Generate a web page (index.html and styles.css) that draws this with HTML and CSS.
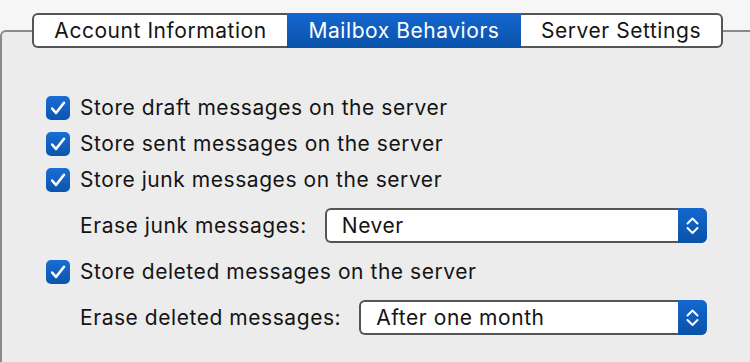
FILE: index.html
```html
<!DOCTYPE html>
<html>
<head>
<meta charset="utf-8">
<link rel="stylesheet" href="styles.css">
</head>
<body>
<div class="page">
  <div class="tabs">
    <div class="tab tab-first">Account Information</div>
    <div class="tab tab-selected">Mailbox Behaviors</div>
    <div class="tab tab-last">Server Settings</div>
  </div>
  <div class="box">
    <div class="check-row">
      <span class="checkbox"><svg viewBox="0 0 24 24" width="24" height="24"><path d="M6.2 12.6 L10 17 L18 6.8" fill="none" stroke="#fff" stroke-width="2.6" stroke-linecap="round" stroke-linejoin="round"/></svg></span>
      <span class="label">Store draft messages on the server</span>
    </div>
    <div class="check-row">
      <span class="checkbox"><svg viewBox="0 0 24 24" width="24" height="24"><path d="M6.2 12.6 L10 17 L18 6.8" fill="none" stroke="#fff" stroke-width="2.6" stroke-linecap="round" stroke-linejoin="round"/></svg></span>
      <span class="label">Store sent messages on the server</span>
    </div>
    <div class="check-row">
      <span class="checkbox"><svg viewBox="0 0 24 24" width="24" height="24"><path d="M6.2 12.6 L10 17 L18 6.8" fill="none" stroke="#fff" stroke-width="2.6" stroke-linecap="round" stroke-linejoin="round"/></svg></span>
      <span class="label">Store junk messages on the server</span>
    </div>
    <div class="popup-row popup-row-first">
      <span class="label">Erase junk messages:</span>
      <div class="popup">
        <span class="popup-value">Never</span>
        <span class="popup-arrows"><svg viewBox="0 0 29 35" width="29" height="35"><path d="M9.5 15.5 L14.5 10.5 L19.5 15.5 M9.5 20 L14.5 25 L19.5 20" fill="none" stroke="#fff" stroke-width="2" stroke-linecap="round" stroke-linejoin="round"/></svg></span>
      </div>
    </div>
    <div class="check-row check-row-after">
      <span class="checkbox"><svg viewBox="0 0 24 24" width="24" height="24"><path d="M6.2 12.6 L10 17 L18 6.8" fill="none" stroke="#fff" stroke-width="2.6" stroke-linecap="round" stroke-linejoin="round"/></svg></span>
      <span class="label">Store deleted messages on the server</span>
    </div>
    <div class="popup-row">
      <span class="label">Erase deleted messages:</span>
      <div class="popup">
        <span class="popup-value">After one month</span>
        <span class="popup-arrows"><svg viewBox="0 0 29 35" width="29" height="35"><path d="M9.5 15.5 L14.5 10.5 L19.5 15.5 M9.5 20 L14.5 25 L19.5 20" fill="none" stroke="#fff" stroke-width="2" stroke-linecap="round" stroke-linejoin="round"/></svg></span>
      </div>
    </div>
  </div>
</div>
</body>
</html>
```

FILE: styles.css
```css
html, body {
  margin: 0;
  padding: 0;
  background: #f6f6f6;
  overflow: hidden;
}
body {
  width: 750px;
  height: 362px;
  font-family: Inter, "Noto Sans", sans-serif;
  font-size: 21px;
  letter-spacing: 0.55px;
  color: #141414;
}
.page {
  padding-top: 13px;
}
.tabs {
  display: flex;
  margin-left: 32px;
  height: 35px;
  position: relative;
  z-index: 1;
}
.tab {
  box-sizing: border-box;
  height: 35px;
  display: flex;
  align-items: center;
  justify-content: center;
  background: #fff;
  border-top: 2px solid #555;
  border-bottom: 2px solid #555;
  padding-bottom: 1px;
}
.tab-first {
  width: 255px;
  border-left: 2px solid #555;
  border-radius: 6px 0 0 6px;
}
.tab-selected {
  width: 234px;
  border: none;
  color: #fff;
  background: linear-gradient(#1467cf, #0a52a9);
}
.tab-last {
  width: 202px;
  border-right: 2px solid #555;
  border-radius: 0 6px 6px 0;
}
.box {
  margin-top: -18px;
  height: 332px;
  box-sizing: border-box;
  background: #ececec;
  border-top: 2px solid #8a8a8a;
  border-left: 2px solid #8a8a8a;
  border-radius: 6px 0 0 0;
  padding: 58px 0 0 44px;
}
.check-row {
  height: 36px;
  display: flex;
  align-items: center;
  gap: 10px;
}
.check-row-after {
  margin-top: 11px;
}
.checkbox {
  width: 24px;
  height: 24px;
  border-radius: 5px;
  background: linear-gradient(#1a6dd4, #0a55ae);
  display: block;
  flex: none;
}
.checkbox svg {
  display: block;
}
.label {
  white-space: nowrap;
  padding-bottom: 1px;
}
.popup-row {
  margin-top: 10px;
  margin-left: 34px;
  width: 627px;
  display: flex;
  align-items: center;
  gap: 18px;
}
.popup {
  flex: 1;
  height: 35px;
  box-sizing: border-box;
  display: flex;
  align-items: center;
  background: #fff;
  border: 2px solid #555;
  border-right: none;
  border-radius: 6px;
}
.popup-value {
  flex: 1;
  padding-left: 15px;
  padding-bottom: 1px;
}
.popup-arrows {
  width: 29px;
  height: 35px;
  margin: -2px 0;
  border-radius: 0 6px 6px 0;
  background: linear-gradient(#1467cf, #0a52a9);
  display: block;
}
.popup-arrows svg {
  display: block;
}
```
